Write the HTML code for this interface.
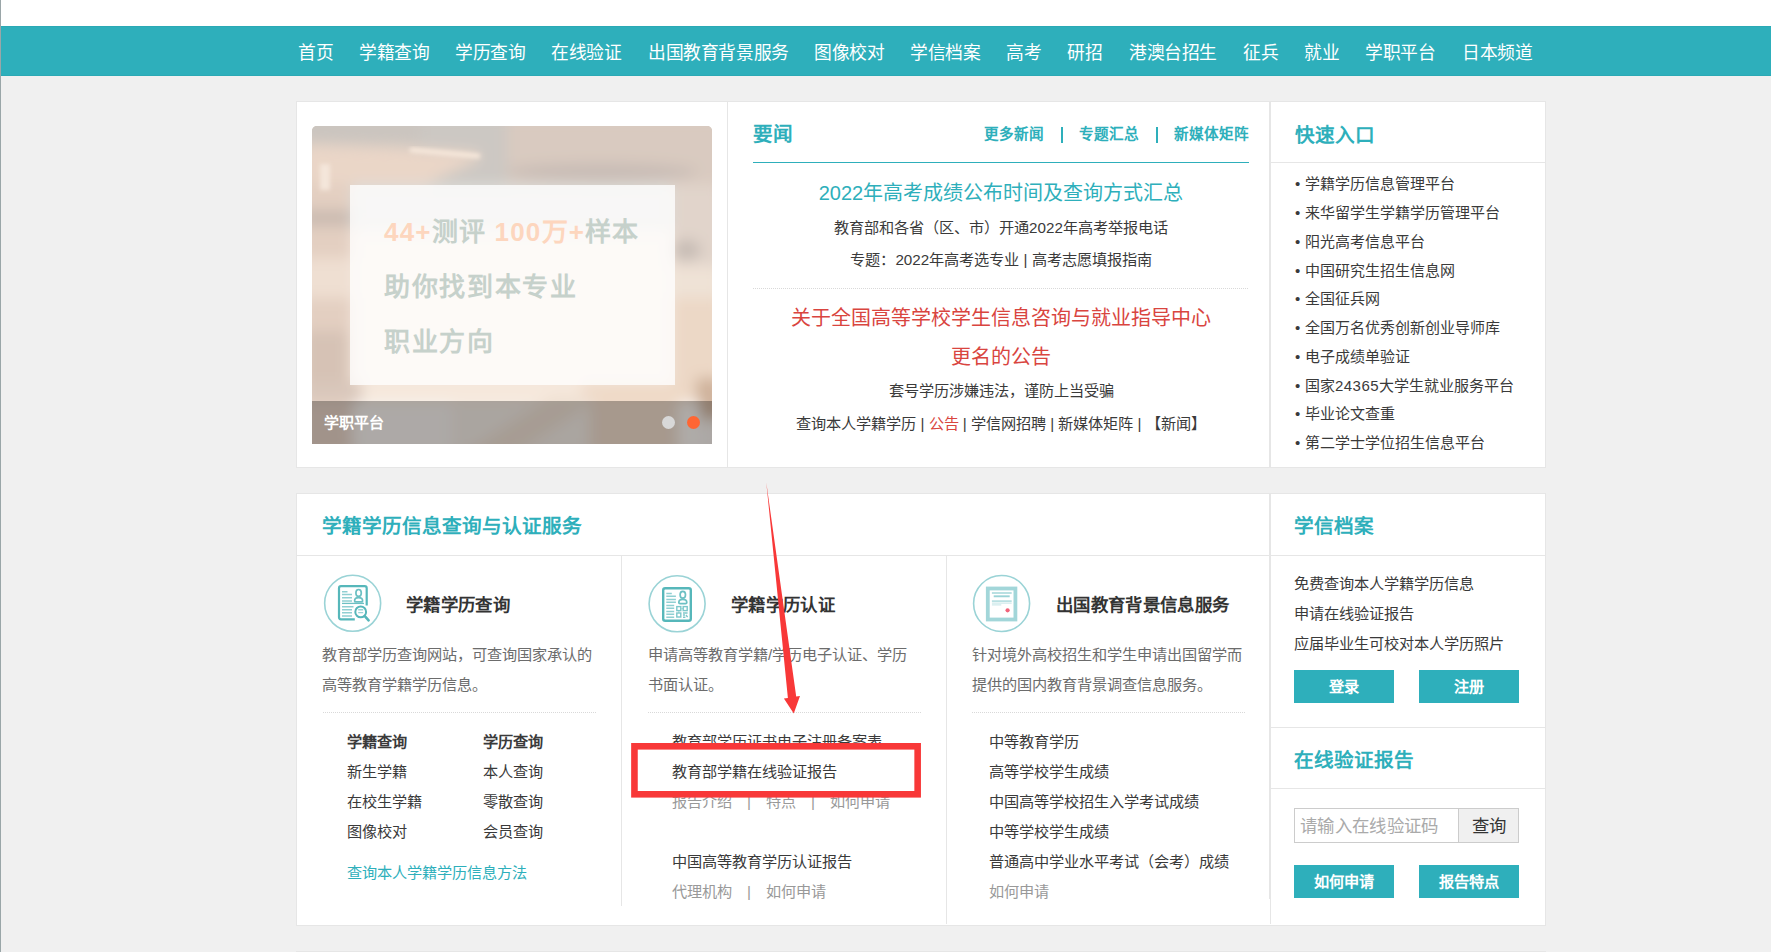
<!DOCTYPE html>
<html lang="zh-CN">
<head>
<meta charset="utf-8">
<title>学信网</title>
<style>
*{margin:0;padding:0;box-sizing:border-box;}
html,body{width:1771px;height:952px;overflow:hidden;background:#f0f0f0;}
body{position:relative;font-family:"Liberation Sans",sans-serif;color:#3a3a3a;}
.a{position:absolute;white-space:nowrap;}
.t{position:absolute;white-space:nowrap;line-height:1;}
.b{font-weight:bold;}
#topwhite{left:0;top:0;width:1771px;height:26px;background:#fff;}
#leftline{left:0;top:0;width:1px;height:952px;background:#9aa6a8;}
#nav{left:0;top:26px;width:1771px;height:50px;background:#2eafbb;border-top:1px solid #2ba9b5;border-bottom:1px solid #2ba9b5;}
.nv{position:absolute;top:43.5px;letter-spacing:-0.4px;font-size:17.8px;line-height:18px;color:#fff;white-space:nowrap;}
.panel{position:absolute;background:#fff;border:1px solid #e6e6e6;}
.vl{position:absolute;background:#e6e6e6;}
.hl{position:absolute;background:#e6e6e6;height:1px;}
.dot{position:absolute;height:1px;background:repeating-linear-gradient(90deg,#d9d9d9 0,#d9d9d9 1px,transparent 1px,transparent 2px);}
.h2{position:absolute;white-space:nowrap;font-weight:bold;color:#2eafbb;font-size:19.6px;line-height:20px;}
.h3{position:absolute;white-space:nowrap;font-weight:bold;color:#333;font-size:17.4px;letter-spacing:0.35px;line-height:20px;margin-top:1.5px;margin-left:1px;}
.s15{position:absolute;white-space:nowrap;font-size:15.2px;line-height:16px;color:#3a3a3a;margin-top:1px;}
.gray{color:#999;}
.teal{color:#2eafbb;}
.d6{color:#6c6c6c;}
.btn{position:absolute;background:#2eafbb;color:#fff;font-weight:bold;font-size:15.2px;text-align:center;white-space:nowrap;}
</style>
</head>
<body>
<div class="a" id="topwhite"></div>
<div class="a" id="nav"></div>
<div class="a" id="leftline"></div>

<!-- NAV -->
<div class="nv" style="left:298px">首页</div>
<div class="nv" style="left:359px">学籍查询</div>
<div class="nv" style="left:455px">学历查询</div>
<div class="nv" style="left:551px">在线验证</div>
<div class="nv" style="left:648px">出国教育背景服务</div>
<div class="nv" style="left:814px">图像校对</div>
<div class="nv" style="left:910px">学信档案</div>
<div class="nv" style="left:1006px">高考</div>
<div class="nv" style="left:1067px">研招</div>
<div class="nv" style="left:1129px">港澳台招生</div>
<div class="nv" style="left:1243px">征兵</div>
<div class="nv" style="left:1304px">就业</div>
<div class="nv" style="left:1365px">学职平台</div>
<div class="nv" style="left:1462px">日本频道</div>

<!-- PANEL 1 -->
<div class="panel" id="p1" style="left:296px;top:101px;width:1250px;height:367px;"></div>
<div class="vl" style="left:727px;top:102px;width:1px;height:365px;"></div>
<div class="vl" style="left:1269px;top:102px;width:2px;height:365px;"></div>


<!-- carousel -->
<div class="a" id="car" style="left:312px;top:126px;width:400px;height:318px;border-radius:5px 5px 0 0;overflow:hidden;background:#e9d9cc;">
  <svg class="a" style="left:0;top:0;" width="400" height="318" viewBox="0 0 400 318">
    <defs>
      <linearGradient id="cbg" x1="0" y1="0" x2="0" y2="1">
        <stop offset="0" stop-color="#cdc7c1"/><stop offset="0.18" stop-color="#d6cbc3"/>
        <stop offset="0.45" stop-color="#ecdccf"/><stop offset="0.8" stop-color="#f3e5d8"/><stop offset="1" stop-color="#f1e3d6"/>
      </linearGradient>
      <filter id="bl" x="-10%" y="-10%" width="120%" height="120%"><feGaussianBlur stdDeviation="7"/></filter>
      <filter id="bl2" x="-10%" y="-10%" width="120%" height="120%"><feGaussianBlur stdDeviation="2"/></filter>
    </defs>
    <rect width="400" height="318" fill="url(#cbg)"/>
    <g filter="url(#bl)">
      <rect x="195" y="-10" width="220" height="75" fill="#d9cac0"/>
      <ellipse cx="290" cy="46" rx="95" ry="9" fill="#c8bcb5"/>
      <rect x="100" y="-10" width="95" height="70" fill="#ccc8c3"/>
      <rect x="-10" y="-10" width="120" height="26" fill="#cbc5bf"/>
      <polygon points="-10,18 100,22 168,27 168,33 105,62 60,75 -10,80" fill="#ead6c7"/>
      <rect x="-10" y="58" width="52" height="220" fill="#e3cfc1"/>
      <rect x="-10" y="84" width="50" height="16" fill="#c9bab0"/>
      <rect x="-10" y="132" width="50" height="40" fill="#efdfd2"/>
      <rect x="-10" y="205" width="46" height="60" fill="#d6c2b5"/>
      <rect x="358" y="58" width="52" height="100" fill="#e1d4cb"/>
      <ellipse cx="374" cy="124" rx="15" ry="10" fill="#c6bbb4"/>
      <rect x="358" y="140" width="52" height="32" fill="#efe2d6"/>
      <rect x="358" y="172" width="52" height="108" fill="#ecd8c6"/>
      <rect x="40" y="58" width="320" height="45" fill="#dddcd8"/>
      <rect x="40" y="105" width="320" height="155" fill="#f3e6dc"/>
      <rect x="45" y="258" width="230" height="20" fill="#f6e8dc"/>
      <rect x="270" y="258" width="100" height="20" fill="#efd9c6"/>
      <rect x="384" y="252" width="26" height="40" fill="#cfb29b"/>
      <rect x="-10" y="256" width="60" height="22" fill="#d9c7bb"/>
      <rect x="-10" y="276" width="50" height="52" fill="#e7d3c6"/>
      <rect x="40" y="276" width="100" height="52" fill="#f8f3ef"/>
      <rect x="140" y="276" width="140" height="52" fill="#f4ece5"/>
      <polygon points="150,330 240,270 290,270 200,330" fill="#efe0d3"/>
      <rect x="278" y="276" width="88" height="52" fill="#efdbcb"/>
      <rect x="366" y="276" width="22" height="52" fill="#fbf6f2"/>
      <rect x="388" y="296" width="22" height="32" fill="#f6f1ed"/>
    </g>
    <g filter="url(#bl2)">
      <path d="M100 24 L166 30" stroke="#f7e8db" stroke-width="5" stroke-linecap="round"/>
      <rect x="8" y="38" width="10" height="26" fill="#f4e6da"/>
    </g>
    <rect x="38" y="59" width="325" height="200" fill="rgba(255,255,255,0.78)"/>
    <rect x="0" y="275" width="400" height="43" fill="rgba(0,0,0,0.30)"/>
  </svg>
  <div class="t" style="left:72px;top:93px;font-size:26px;font-weight:600;color:#c6d1cb;letter-spacing:1.2px;"><span style="color:#fdd6be">44+</span>测评 <span style="color:#fdd6be">100万+</span>样本</div>
  <div class="t" style="left:72px;top:148px;font-size:26px;font-weight:600;color:#c6d1cb;letter-spacing:1.65px;">助你找到本专业</div>
  <div class="t" style="left:72px;top:203px;font-size:26px;font-weight:600;color:#c6d1cb;letter-spacing:1.5px;">职业方向</div>
  <div class="t b" style="left:12px;top:289px;font-size:15px;color:#fff;">学职平台</div>
  <div class="a" style="left:350px;top:290px;width:13px;height:13px;border-radius:50%;background:#d8d8d8;"></div>
  <div class="a" style="left:375px;top:290px;width:13px;height:13px;border-radius:50%;background:#ff6633;"></div>
</div>

<!-- news -->
<div class="h2" style="left:753px;top:124px;">要闻</div>
<div class="t b teal" style="left:984px;top:127px;font-size:14.6px;">更多新闻</div>
<div class="a" style="left:1060.5px;top:127px;width:2px;height:16px;background:#2eafbb;"></div>
<div class="t b teal" style="left:1079px;top:127px;font-size:14.6px;">专题汇总</div>
<div class="a" style="left:1156px;top:127px;width:2px;height:16px;background:#2eafbb;"></div>
<div class="t b teal" style="left:1174px;top:127px;font-size:14.6px;">新媒体矩阵</div>
<div class="a" style="left:753px;top:162px;width:496px;height:1px;background:#2eafbb;"></div>
<div class="t teal" style="left:753px;width:496px;text-align:center;top:182.5px;font-size:20px;">2022年高考成绩公布时间及查询方式汇总</div>
<div class="t" style="left:753px;width:496px;text-align:center;top:220px;font-size:15.2px;">教育部和各省（区、市）开通2022年高考举报电话</div>
<div class="t" style="left:753px;width:496px;text-align:center;top:252px;font-size:15.2px;">专题：2022年高考选专业 | 高考志愿填报指南</div>
<div class="dot" style="left:753px;top:288px;width:496px;"></div>
<div class="t" style="left:753px;width:496px;text-align:center;top:308px;font-size:20px;color:#d9453f;">关于全国高等学校学生信息咨询与就业指导中心</div>
<div class="t" style="left:753px;width:496px;text-align:center;top:347px;font-size:20px;color:#d9453f;">更名的公告</div>
<div class="t" style="left:753px;width:496px;text-align:center;top:383px;font-size:15.2px;">套号学历涉嫌违法，谨防上当受骗</div>
<div class="t" style="left:753px;width:496px;text-align:center;top:416px;font-size:15.2px;">查询本人学籍学历 | <span style="color:#d9453f">公告</span> | 学信网招聘 | 新媒体矩阵 | 【新闻】</div>

<!-- quick -->
<div class="h2" style="left:1295px;top:125px;">快速入口</div>
<div class="hl" style="left:1271px;top:162px;width:274px;"></div>
<div class="t" style="left:1295px;top:176px;font-size:15px;">•</div><div class="t" style="left:1305px;top:176px;font-size:15px;">学籍学历信息管理平台</div>
<div class="t" style="left:1295px;top:205px;font-size:15px;">•</div><div class="t" style="left:1305px;top:205px;font-size:15px;">来华留学生学籍学历管理平台</div>
<div class="t" style="left:1295px;top:234px;font-size:15px;">•</div><div class="t" style="left:1305px;top:234px;font-size:15px;">阳光高考信息平台</div>
<div class="t" style="left:1295px;top:263px;font-size:15px;">•</div><div class="t" style="left:1305px;top:263px;font-size:15px;">中国研究生招生信息网</div>
<div class="t" style="left:1295px;top:291px;font-size:15px;">•</div><div class="t" style="left:1305px;top:291px;font-size:15px;">全国征兵网</div>
<div class="t" style="left:1295px;top:320px;font-size:15px;">•</div><div class="t" style="left:1305px;top:320px;font-size:15px;">全国万名优秀创新创业导师库</div>
<div class="t" style="left:1295px;top:349px;font-size:15px;">•</div><div class="t" style="left:1305px;top:349px;font-size:15px;">电子成绩单验证</div>
<div class="t" style="left:1295px;top:378px;font-size:15px;">•</div><div class="t" style="left:1305px;top:378px;font-size:15px;">国家<span style="letter-spacing:0.45px">24365</span>大学生就业服务平台</div>
<div class="t" style="left:1295px;top:406px;font-size:15px;">•</div><div class="t" style="left:1305px;top:406px;font-size:15px;">毕业论文查重</div>
<div class="t" style="left:1295px;top:435px;font-size:15px;">•</div><div class="t" style="left:1305px;top:435px;font-size:15px;">第二学士学位招生信息平台</div>

<!-- PANEL 2 -->
<div class="panel" id="p2" style="left:296px;top:493px;width:1250px;height:433px;"></div>


<div class="h2" style="left:322px;top:516px;">学籍学历信息查询与认证服务</div>
<div class="hl" style="left:297px;top:555px;width:1248px;"></div>
<div class="vl" style="left:621px;top:556px;width:1px;height:350px;"></div>
<div class="vl" style="left:946px;top:556px;width:1px;height:368px;"></div>
<div class="vl" style="left:1269px;top:494px;width:1px;height:405px;"></div>
<div class="vl" style="left:1270px;top:494px;width:1px;height:430px;"></div>

<!-- col1 -->
<svg class="a" id="ic1" style="left:323px;top:574px;" width="60" height="60" viewBox="0 0 60 60" fill="none">
  <circle cx="29.65" cy="29.3" r="28" stroke="#9ad3d6" stroke-width="1.6"/>
  <path d="M43.7 31.5 V14.2 a2 2 0 0 0 -2 -2 H18 a2 2 0 0 0 -2 2 V43.3 a2 2 0 0 0 2 2 H31.8" stroke="#56b7ba" stroke-width="2.2"/>
  <g stroke="#8fcfd2" stroke-width="1.5">
    <path d="M19 17.7 H24.5 M19 20.6 H29 M19 23.7 H29 M19 26.9 H29 M19 32.7 H30.5 M19 35.8 H29 M19 38.7 H29 M19 41.9 H29"/>
  </g>
  <path d="M19 29.4 H41" stroke="#6cc0c3" stroke-width="1.3"/>
  <ellipse cx="35.6" cy="18.9" rx="2.7" ry="3.4" stroke="#6cc0c3" stroke-width="1.7"/>
  <path d="M31.6 26.9 q0 -3.2 4 -3.2 q4 0 4 3.2 q0 1 -1.2 1 h-5.6 q-1.2 0 -1.2 -1z" stroke="#6cc0c3" stroke-width="1.7"/>
  <circle cx="37.7" cy="37.9" r="5.4" stroke="#56b7ba" stroke-width="2" fill="#fff"/>
  <path d="M35.2 35.8 H40.2 M35.2 38.6 H40.2" stroke="#9ad3d6" stroke-width="1.4"/>
  <path d="M41.8 42.1 L45.6 46.3" stroke="#56b7ba" stroke-width="2.6" stroke-linecap="round"/>
</svg>
<div class="h3" style="left:405px;top:593px;">学籍学历查询</div>
<div class="s15 d6" style="left:322px;top:646px;">教育部学历查询网站，可查询国家承认的</div>
<div class="s15 d6" style="left:322px;top:676px;">高等教育学籍学历信息。</div>
<div class="dot" style="left:323px;top:712px;width:274px;"></div>
<div class="s15 b" style="left:347px;top:733px;">学籍查询</div>
<div class="s15 b" style="left:483px;top:733px;">学历查询</div>
<div class="s15" style="left:347px;top:763px;">新生学籍</div>
<div class="s15" style="left:483px;top:763px;">本人查询</div>
<div class="s15" style="left:347px;top:793px;">在校生学籍</div>
<div class="s15" style="left:483px;top:793px;">零散查询</div>
<div class="s15" style="left:347px;top:823px;">图像校对</div>
<div class="s15" style="left:483px;top:823px;">会员查询</div>
<div class="s15 teal" style="left:347px;top:864px;">查询本人学籍学历信息方法</div>

<!-- col2 -->
<svg class="a" id="ic2" style="left:647px;top:574px;" width="60" height="60" viewBox="0 0 60 60" fill="none">
  <circle cx="30.1" cy="29.8" r="28" stroke="#9ad3d6" stroke-width="1.6"/>
  <rect x="16.2" y="14.2" width="27.6" height="32.6" rx="2" stroke="#56b7ba" stroke-width="2.4"/>
  <g stroke="#8fcfd2" stroke-width="1.5">
    <path d="M19.3 19.4 H24.8 M19.3 22.3 H28.9 M19.3 25.5 H28.9 M19.3 28.3 H28.9 M19.3 31.5 H27.2 M19.3 34.3 H27.2 M19.3 37.4 H27.2 M19.3 40.3 H27.2 M19.3 43.3 H27.2"/>
  </g>
  <ellipse cx="35.8" cy="20.8" rx="2.7" ry="3.4" stroke="#6cc0c3" stroke-width="1.7"/>
  <path d="M31.8 28.6 q0 -3.2 4 -3.2 q4 0 4 3.2 q0 1 -1.2 1 h-5.6 q-1.2 0 -1.2 -1z" stroke="#6cc0c3" stroke-width="1.7"/>
  <g stroke="#7cc7ca" stroke-width="1.4">
    <rect x="29.8" y="32.6" width="4" height="4"/>
    <rect x="36.2" y="32.6" width="4" height="4"/>
    <rect x="29.8" y="39" width="4" height="4"/>
    <path d="M36 39 H40.6 M36 41 H38 M39 41 L40.6 43.2 M36 43.2 H38.4 M34.6 34.6 H35.6 M31.8 37.4 V38.4"/>
  </g>
</svg>
<div class="h3" style="left:730px;top:593px;">学籍学历认证</div>
<div class="s15 d6" style="left:648px;top:646px;">申请高等教育学籍/学历电子认证、学历</div>
<div class="s15 d6" style="left:648px;top:676px;">书面认证。</div>
<div class="dot" style="left:648px;top:712px;width:274px;"></div>
<div class="s15" style="left:672px;top:733px;">教育部学历证书电子注册备案表</div>
<div class="s15" style="left:672px;top:763px;">教育部学籍在线验证报告</div>
<div class="s15 gray" style="left:672px;top:793px;">报告介绍　|　特点　|　如何申请</div>
<div class="s15" style="left:672px;top:853px;">中国高等教育学历认证报告</div>
<div class="s15 gray" style="left:672px;top:883px;">代理机构　|　如何申请</div>

<!-- col3 -->
<svg class="a" id="ic3" style="left:971px;top:574px;" width="60" height="60" viewBox="0 0 60 60" fill="none">
  <circle cx="30.6" cy="29.5" r="28" stroke="#9ad3d6" stroke-width="1.6"/>
  <rect x="16.8" y="14.5" width="27.6" height="31" stroke="#a2d6d9" stroke-width="3.8"/>
  <path d="M20.9 19 H40.7 M20.9 27.1 H40.7" stroke="#b9e0e2" stroke-width="1.8"/>
  <path d="M22.7 22.3 H38.7" stroke="#9ad3d6" stroke-width="1.9"/>
  <path d="M20.9 29.2 H40.7 M20.9 30.9 H30.3" stroke="#cfeaec" stroke-width="1.3"/>
  <circle cx="36.6" cy="36.3" r="2.1" fill="#f2637a"/>
</svg>
<div class="h3" style="left:1055px;top:593px;">出国教育背景信息服务</div>
<div class="s15 d6" style="left:972px;top:646px;">针对境外高校招生和学生申请出国留学而</div>
<div class="s15 d6" style="left:972px;top:676px;">提供的国内教育背景调查信息服务。</div>
<div class="dot" style="left:972px;top:712px;width:274px;"></div>
<div class="s15" style="left:989px;top:733px;">中等教育学历</div>
<div class="s15" style="left:989px;top:763px;">高等学校学生成绩</div>
<div class="s15" style="left:989px;top:793px;">中国高等学校招生入学考试成绩</div>
<div class="s15" style="left:989px;top:823px;">中等学校学生成绩</div>
<div class="s15" style="left:989px;top:853px;">普通高中学业水平考试（会考）成绩</div>
<div class="s15 gray" style="left:989px;top:883px;">如何申请</div>

<!-- right col -->
<div class="h2" style="left:1294px;top:516px;">学信档案</div>
<div class="s15" style="left:1294px;top:575px;">免费查询本人学籍学历信息</div>
<div class="s15" style="left:1294px;top:605px;">申请在线验证报告</div>
<div class="s15" style="left:1294px;top:635px;">应届毕业生可校对本人学历照片</div>
<div class="btn" style="left:1294px;top:670px;width:100px;height:33px;line-height:33px;">登录</div>
<div class="btn" style="left:1419px;top:670px;width:100px;height:33px;line-height:33px;">注册</div>
<div class="hl" style="left:1271px;top:727px;width:274px;"></div>
<div class="h2" style="left:1294px;top:750px;">在线验证报告</div>
<div class="hl" style="left:1271px;top:788px;width:274px;"></div>
<div class="a" style="left:1294px;top:808px;width:165px;height:35px;border:1px solid #ccc;background:#fff;"></div>
<div class="t" style="left:1300px;top:818px;font-size:17.4px;letter-spacing:0.35px;color:#aaa;">请输入在线验证码</div>
<div class="a" style="left:1458px;top:808px;width:61px;height:35px;border:1px solid #ccc;background:#f0f0f0;"></div>
<div class="t" style="left:1458px;width:61px;text-align:center;top:818px;font-size:17.4px;color:#333;">查询</div>
<div class="btn" style="left:1294px;top:865px;width:100px;height:33px;line-height:33px;">如何申请</div>
<div class="btn" style="left:1419px;top:865px;width:100px;height:33px;line-height:33px;">报告特点</div>

<!-- red annotation -->
<svg class="a" id="redbox" style="left:620px;top:735px;" width="320" height="75" viewBox="0 0 320 75"><rect x="14.45" y="11.3" width="283.2" height="48" fill="none" stroke="#f83838" stroke-width="6.6"/></svg>
<svg class="a" id="arrow" style="left:750px;top:475px;" width="70" height="250" viewBox="0 0 70 250">
  <path d="M16.3 7.5 L37.9 222.9 L33.9 223.5 L43.75 238.4 L50 221.1 L46.2 221.4 Z" fill="#f83838"/>
</svg>

<!-- PANEL 3 -->
<div class="panel" id="p3" style="left:296px;top:951px;width:1250px;height:40px;"></div>
</body>
</html>
